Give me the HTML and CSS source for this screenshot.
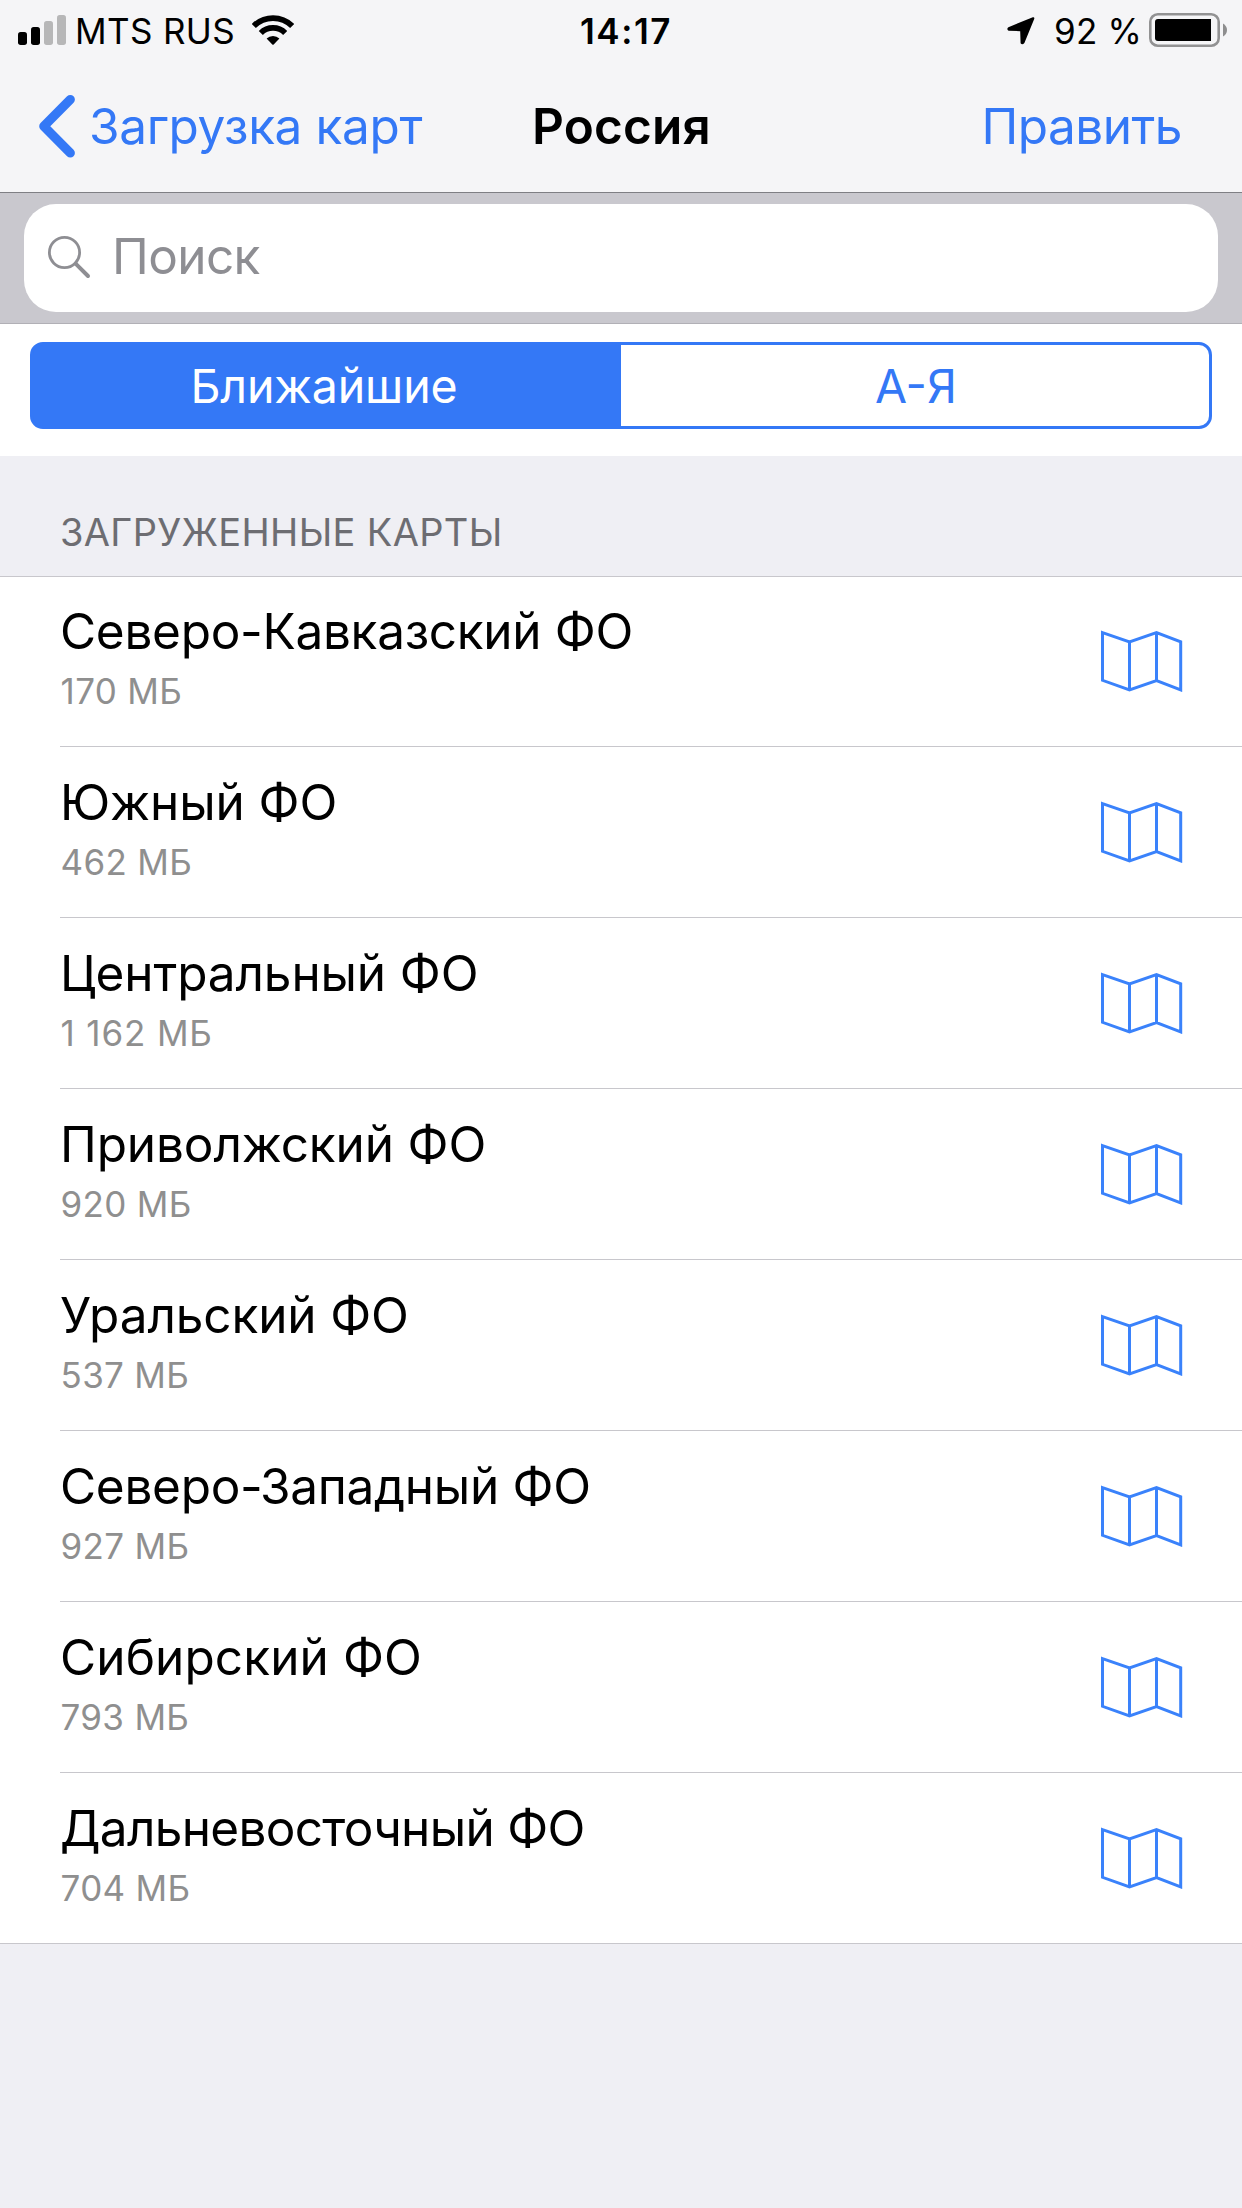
FILE: index.html
```
<!DOCTYPE html>
<html lang="ru">
<head>
<meta charset="utf-8">
<title>Россия</title>
<link rel="stylesheet" href="styles.css">
</head>
<body>
<svg class="symbols" width="0" height="0" aria-hidden="true">
  <symbol id="map" viewBox="0 0 82 62">
    <path d="M1.5 2.7L28.5 12L55.5 2.7L79.7 11.9V59.9L55.5 50.7L28.5 59.9L1.5 50.3ZM28.5 12V59.9M55.5 2.7V50.7" fill="none" stroke="#3a82fb" stroke-width="3"/>
  </symbol>
</svg>

<header class="top">
  <div class="status">
    <div class="status-left">
      <svg class="signal" width="48" height="30" viewBox="0 0 48 30">
        <rect x="0" y="17" width="9" height="13" rx="2.7"/>
        <rect x="13" y="12" width="9" height="18" rx="2.7"/>
        <rect x="26" y="6" width="9" height="24" rx="2.7" fill="#b7b7b8"/>
        <rect x="39" y="0" width="9" height="30" rx="2.7" fill="#b7b7b8"/>
      </svg>
      <span class="carrier">MTS RUS</span>
      <svg class="wifi" width="42" height="30" viewBox="0 0 42 30">
        <path d="M1.8 11A27.2 27.2 0 0 1 40.2 11M8.8 18A17.2 17.2 0 0 1 33.2 18" fill="none" stroke="#000" stroke-width="5.8"/>
        <path d="M14.6 23.6A9 9 0 0 1 27.4 23.6L21.7 29.4Q21 30 20.3 29.4Z"/>
      </svg>
    </div>
    <span class="time">14:17</span>
    <div class="status-right">
      <svg class="location" width="28" height="28" viewBox="0 0 28 28">
        <path d="M25.8 .3Q27.8-.2 27.2 2L17.4 26Q15.2 28.5 13.6 26.2L13.2 14.2L1.6 13.8Q-.8 12 1.4 10.2Z"/>
      </svg>
      <span class="percent">92&nbsp;%</span>
      <svg class="battery" width="79" height="34" viewBox="0 0 79 34">
        <rect x="1.3" y="1.3" width="68.4" height="31.4" rx="7.5" fill="none" stroke="#929293" stroke-width="2.6"/>
        <path d="M9 6H62V28H9Q6 28 6 25V9Q6 6 9 6Z"/>
        <path d="M74 10.5Q78 13 78 17T74 23.5Z" fill="#8e8e8f"/>
      </svg>
    </div>
  </div>
  <nav class="nav">
    <a class="back">
      <svg width="40" height="66" viewBox="0 0 40 66">
        <path d="M34.3 6.6L7.8 33.2L34.3 59.9" fill="none" stroke="#3478f6" stroke-width="9.2" stroke-linecap="round" stroke-linejoin="round"/>
      </svg>
      <span>Загрузка карт</span>
    </a>
    <h1 class="title">Россия</h1>
    <a class="edit">Править</a>
  </nav>
</header>

<div class="search">
  <div class="field">
    <svg width="44" height="44" viewBox="0 0 44 44" fill="none" stroke="#8e8e93">
      <circle cx="17.5" cy="17.5" r="15.1" stroke-width="2.8"/>
      <path d="M28.6 28.6L41 41" stroke-width="4" stroke-linecap="round"/>
    </svg>
    <span>Поиск</span>
  </div>
</div>

<div class="sort">
  <div class="segments">
    <span class="segment selected">Ближайшие</span>
    <span class="segment">А-Я</span>
  </div>
</div>

<h2 class="section">ЗАГРУЖЕННЫЕ КАРТЫ</h2>

<ul class="list">
  <li class="row"><div class="info"><span class="name tight">Северо-Кавказский ФО</span><span class="size">170 МБ</span></div><svg class="map"><use href="#map"/></svg></li>
  <li class="row"><div class="info"><span class="name">Южный ФО</span><span class="size">462 МБ</span></div><svg class="map"><use href="#map"/></svg></li>
  <li class="row"><div class="info"><span class="name">Центральный ФО</span><span class="size grouped">1&nbsp;162 МБ</span></div><svg class="map"><use href="#map"/></svg></li>
  <li class="row"><div class="info"><span class="name">Приволжский ФО</span><span class="size">920 МБ</span></div><svg class="map"><use href="#map"/></svg></li>
  <li class="row"><div class="info"><span class="name">Уральский ФО</span><span class="size">537 МБ</span></div><svg class="map"><use href="#map"/></svg></li>
  <li class="row"><div class="info"><span class="name tight">Северо-Западный ФО</span><span class="size">927 МБ</span></div><svg class="map"><use href="#map"/></svg></li>
  <li class="row"><div class="info"><span class="name loose">Сибирский ФО</span><span class="size">793 МБ</span></div><svg class="map"><use href="#map"/></svg></li>
  <li class="row"><div class="info"><span class="name tighter">Дальневосточный ФО</span><span class="size">704 МБ</span></div><svg class="map"><use href="#map"/></svg></li>
</ul>
</body>
</html>
```
FILE: styles.css
```
* { box-sizing: border-box; margin: 0; padding: 0; }

body {
  min-height: 2208px;
  background: #efeff4;
  color: #000;
  font-family: Inter, "Noto Sans", sans-serif;
  font-size: 49.5px;
  font-weight: 400;
  white-space: nowrap;
}

svg { display: block; flex: none; }
.symbols { position: absolute; }

/* Status bar and navigation */
.top {
  height: 193px;
  background: #f5f5f7;
  border-bottom: 1px solid #7f7f84;
}

.status {
  display: grid;
  grid-template-columns: 1fr auto 1fr;
  height: 63px;
  font-size: 35px;
  line-height: 63px;
}
.status-left { display: flex; padding-left: 18px; }
.signal { margin-top: 15px; }
.carrier { width: 177px; padding-left: 9px; letter-spacing: .35px; }
.wifi { margin: 15px 0 0 9px; }
.time { font-weight: 600; letter-spacing: 1.6px; padding-left: 10px; }
.status-right { display: flex; justify-content: flex-end; padding-right: 14px; }
.location { margin: 17px 19px 0 0; }
.percent { width: 95px; letter-spacing: .2px; }
.battery { margin-top: 13px; }

.nav {
  display: grid;
  grid-template-columns: 1fr auto 1fr;
  height: 126px;
  line-height: 126px;
}
.back, .edit { color: #3478f6; }
.back { display: flex; padding-left: 36px; letter-spacing: -.37px; }
.back svg { margin: 30px 13px 0 0; }
.title { padding-left: 1px; font-size: inherit; font-weight: 600; letter-spacing: .15px; }
.edit { padding-right: 60px; text-align: right; letter-spacing: -.5px; }

/* Search */
.search {
  height: 131px;
  padding: 11px 24px;
  background: #c9c8ce;
  border-bottom: 1px solid #b1b0b6;
}
.field {
  display: flex;
  height: 108px;
  padding-left: 23px;
  border-radius: 32px;
  background: #fff;
  color: #8e8e93;
  line-height: 104px;
  letter-spacing: -.6px;
}
.field svg { margin: 31px 21px 0 0; }

/* Sort order switch */
.sort { height: 132px; padding: 18px 30px 0; background: #fff; }
.segments {
  display: grid;
  grid-template-columns: 1fr 1fr;
  height: 87px;
  overflow: hidden;
  border: 3px solid #3478f6;
  border-radius: 13px;
  background: #3478f6;
}
.segment {
  padding-left: 2px;
  background: #fff;
  color: #3478f6;
  font-size: 46.5px;
  line-height: 82px;
  text-align: center;
}
.selected {
  padding: 0 6px 0 0;
  background: #3478f6;
  color: #fff;
  letter-spacing: -.15px;
}

/* List of maps */
.section {
  height: 120px;
  padding-left: 60px;
  color: #6d6d72;
  font-size: 38px;
  font-weight: 400;
  line-height: 153px;
  letter-spacing: .34px;
}
.list {
  list-style: none;
  background: #fff;
  box-shadow: inset 0 1px #c8c7cc, inset 0 -1px #c8c7cc;
}
.row {
  display: flex;
  align-items: flex-start;
  height: 171px;
  margin-left: 60px;
  border-bottom: 1px solid #c8c7cc;
}
.info { display: flex; flex: 1; flex-direction: column; padding-top: 25px; }
.name { line-height: 60px; letter-spacing: -.12px; }
.tight { letter-spacing: -.3px; }
.tighter { letter-spacing: -.7px; }
.loose { letter-spacing: .1px; }
.size { padding-left: .6px; color: #8f8f8f; font-size: 35px; line-height: 61px; letter-spacing: .3px; }
.grouped { letter-spacing: .85px; }
.map { width: 82px; height: 62px; margin: 54px 59px 0 0; }
```
